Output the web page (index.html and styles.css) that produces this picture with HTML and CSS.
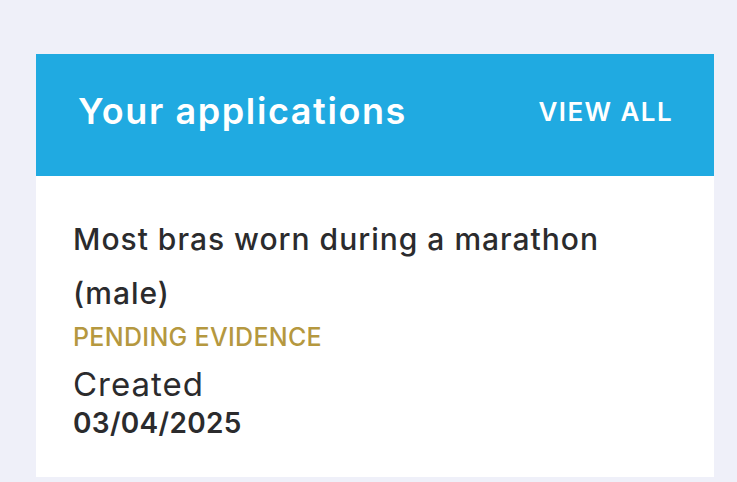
FILE: index.html
```html
<!DOCTYPE html>
<html lang="en">
<head>
    <meta charset="UTF-8">
    <meta name="viewport" content="width=device-width, initial-scale=1.0">
    <title>Your applications</title>
    <link rel="stylesheet" href="styles.css">
</head>
<body>
    <div class="card">
        <div class="card-header">
            <h2>Your applications</h2>
            <a href="#" class="view-all">VIEW ALL</a>
        </div>
        <div class="card-body">
            <p class="record-title">Most bras worn during a marathon (male)</p>
            <p class="status">PENDING EVIDENCE</p>
            <p class="created-label">Created</p>
            <p class="created-date">03/04/2025</p>
        </div>
    </div>
</body>
</html>
```

FILE: styles.css
```css
/* General */
* {
    margin: 0;
    padding: 0;
    box-sizing: border-box;
    font-family: Inter, "Noto Sans", sans-serif;
}

body {
    background-color: #eff0f9;
    padding: 54px 23px 0 36px;
    height: 100vh;
    overflow: hidden;
}

/* Card */
.card {
    background-color: #ffffff;
    height: 423px;
}

.card-header {
    background-color: #20aae1;
    height: 122px;
    display: flex;
    align-items: center;
    justify-content: space-between;
    padding: 0 41px 8px 42px;
}

.card-header h2 {
    color: #ffffff;
    font-size: 36px;
    font-weight: 600;
    letter-spacing: 1.6px;
}

.view-all {
    color: #ffffff;
    font-size: 26px;
    font-weight: 600;
    letter-spacing: 1.4px;
    text-decoration: none;
}

/* Body */
.card-body {
    padding: 36px 37px 0;
    color: #2b2b2d;
}

.record-title {
    font-size: 30px;
    font-weight: 550;
    line-height: 54px;
    letter-spacing: 1px;
    width: 600px;
}

.status {
    color: #b5983f;
    font-size: 25px;
    font-weight: 500;
    letter-spacing: 0.3px;
    margin-top: 2px;
}

.created-label {
    font-size: 33px;
    font-weight: 400;
    letter-spacing: 1px;
    margin-top: 12px;
}

.created-date {
    font-size: 28px;
    font-weight: 600;
    letter-spacing: 0.3px;
    margin-top: 2px;
}
```
